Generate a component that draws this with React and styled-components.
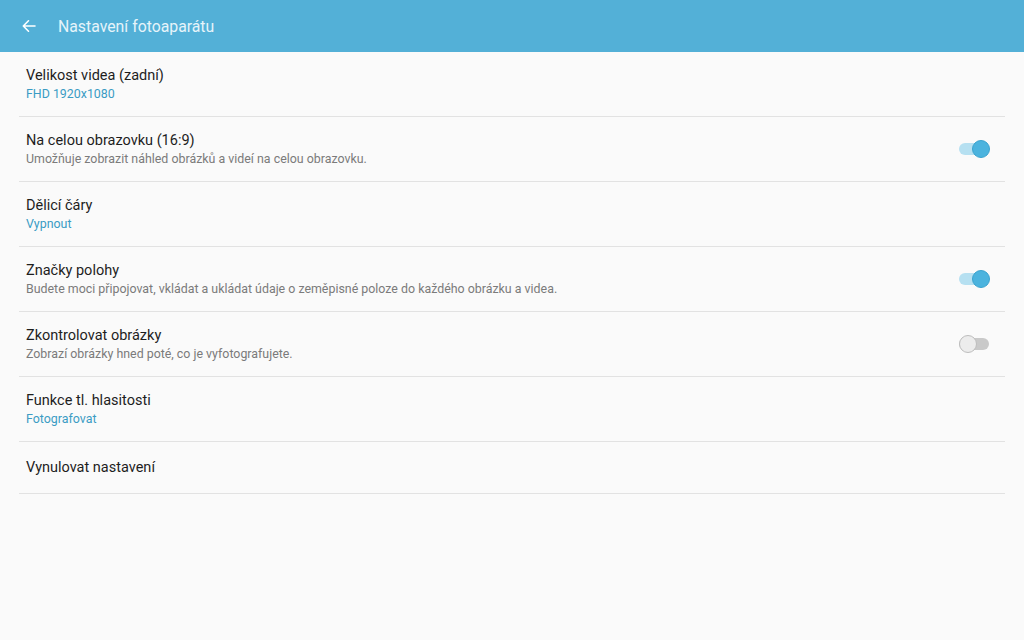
import React from 'react';
import styled, { createGlobalStyle } from 'styled-components';

const GlobalStyle = createGlobalStyle`
  html, body {
    margin: 0;
    padding: 0;
    background: #fafafa;
    font-family: Roboto, "Noto Sans", sans-serif;
  }
`;

const Page = styled.div`
  width: 1024px;
  height: 640px;
  background: #fafafa;
  overflow: hidden;
`;

const AppBar = styled.header`
  height: 52px;
  background: #53b0d7;
  display: flex;
  align-items: center;
  padding-left: 20px;
  box-sizing: border-box;
`;

const BackButton = styled.button`
  width: 18px;
  height: 18px;
  padding: 0;
  border: none;
  background: none;
  display: flex;
  align-items: center;
  justify-content: center;
  margin-right: 20px;
  cursor: pointer;
`;

const Title = styled.h1`
  margin: 0;
  font-size: 15.8px;
  font-weight: 400;
  color: #e6f4fa;
`;

const List = styled.div`
  margin: 0 19px;
`;

// each row is 65px including its bottom rule, the last one 52px
const Row = styled.div`
  height: ${p => (p.$short ? 51 : 64)}px;
  border-bottom: 1px solid #e2e2e2;
  display: flex;
  align-items: center;
  justify-content: space-between;
  padding: 0 16px 0 7px;
`;

const Texts = styled.div`
  display: flex;
  flex-direction: column;
  gap: 1px;
`;

const Label = styled.div`
  font-size: 14.5px;
  color: #1e1e1e;
  line-height: 18px;
`;

const Sub = styled.div`
  font-size: 12.4px;
  line-height: 15px;
  color: ${p => (p.$accent ? '#3b9cc4' : '#7b7b7b')};
`;

const Track = styled.div`
  position: relative;
  width: 30px;
  height: 12px;
  border-radius: 6px;
  background: ${p => (p.$on ? '#b6e0f1' : '#c9c9c9')};
`;

const Knob = styled.div`
  position: absolute;
  top: -3.5px;
  left: ${p => (p.$on ? '13px' : '0px')};
  width: 18px;
  height: 18px;
  border-radius: 50%;
  box-sizing: border-box;
  background: ${p => (p.$on ? '#4bb3de' : '#ececec')};
  border: 1px solid ${p => (p.$on ? '#3aa3cf' : '#bdbdbd')};
`;

const Toggle = ({ on }) => (
  <Track $on={on}>
    <Knob $on={on} />
  </Track>
);

const items = [
  { label: 'Velikost videa (zadní)', sub: 'FHD 1920x1080', accent: true },
  { label: 'Na celou obrazovku (16:9)', sub: 'Umožňuje zobrazit náhled obrázků a videí na celou obrazovku.', toggle: true },
  { label: 'Dělicí čáry', sub: 'Vypnout', accent: true },
  { label: 'Značky polohy', sub: 'Budete moci připojovat, vkládat a ukládat údaje o zeměpisné poloze do každého obrázku a videa.', toggle: true },
  { label: 'Zkontrolovat obrázky', sub: 'Zobrazí obrázky hned poté, co je vyfotografujete.', toggle: false },
  { label: 'Funkce tl. hlasitosti', sub: 'Fotografovat', accent: true },
];

export default function App() {
  return (
    <Page>
      <GlobalStyle />
      <AppBar>
        <BackButton aria-label="Zpět">
          <svg width="16" height="16" viewBox="0 0 16 16" fill="none" stroke="#ffffff" strokeWidth="1.6" strokeLinecap="round" strokeLinejoin="round">
            <path d="M14 8H2.5M7.5 2.8L2.3 8l5.2 5.2" />
          </svg>
        </BackButton>
        <Title>Nastavení fotoaparátu</Title>
      </AppBar>
      <List>
        {items.map(it => (
          <Row key={it.label}>
            <Texts>
              <Label>{it.label}</Label>
              <Sub $accent={it.accent}>{it.sub}</Sub>
            </Texts>
            {it.toggle !== undefined && <Toggle on={it.toggle} />}
          </Row>
        ))}
        <Row $short>
          <Label>Vynulovat nastavení</Label>
        </Row>
      </List>
    </Page>
  );
}
